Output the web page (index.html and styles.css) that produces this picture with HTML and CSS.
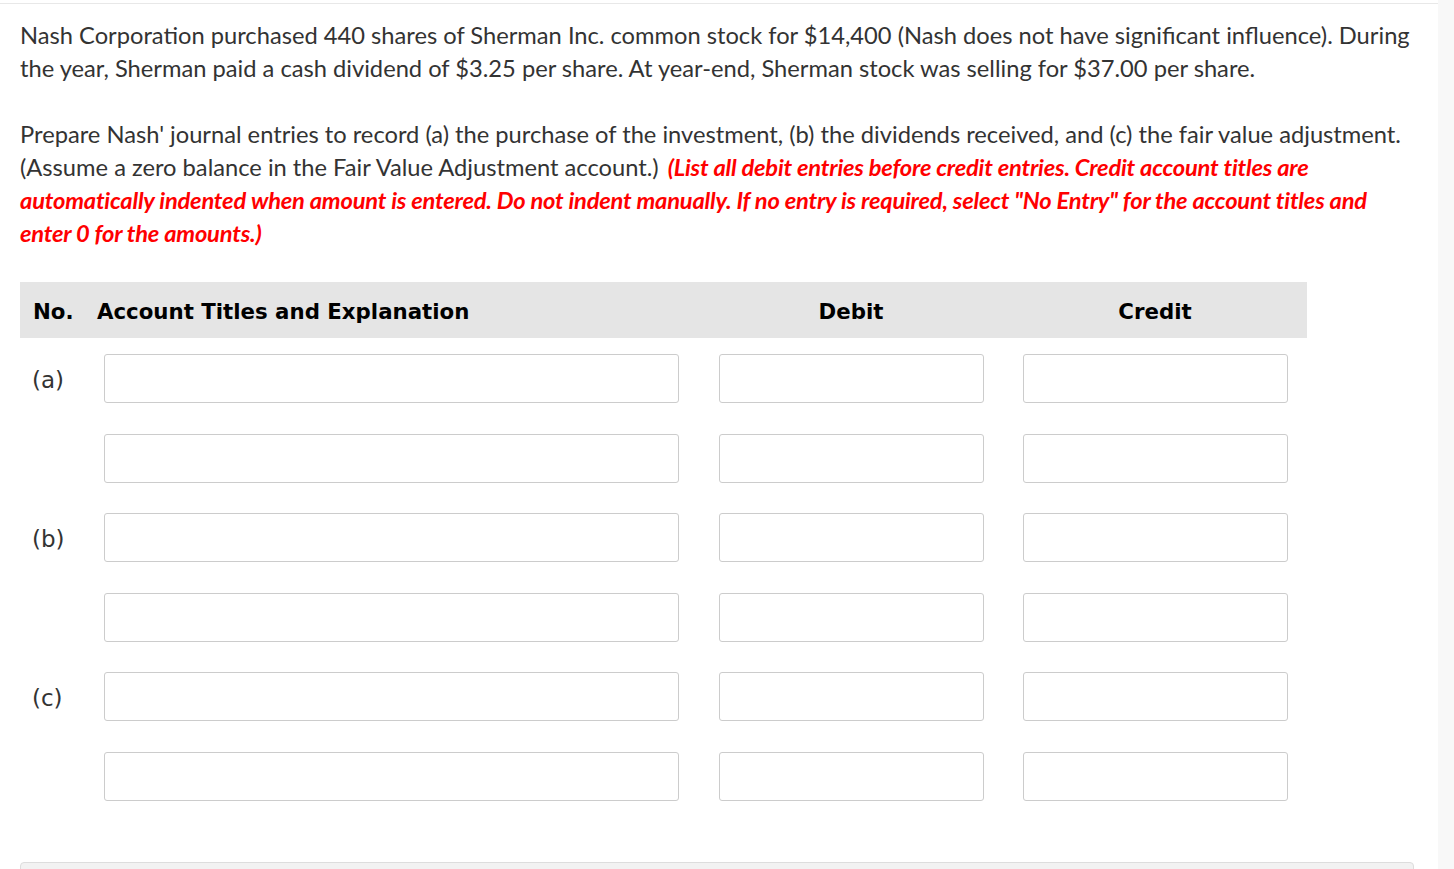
FILE: index.html
```html
<!DOCTYPE html>
<html lang="en">
<head>
    <meta charset="UTF-8">
    <title>Journal Entries - Nash Corporation</title>
    <link rel="stylesheet" href="styles.css">
</head>
<body>
    <div class="page">
        <div class="question">
            <p>Nash Corporation purchased 440 shares of Sherman Inc. common stock for $14,400 (Nash does not have significant influence). During the year, Sherman paid a cash dividend of $3.25 per share. At year-end, Sherman stock was selling for $37.00 per share.</p>

            <p>Prepare Nash' journal entries to record (a) the purchase of the investment, (b) the dividends received, and (c) the fair value adjustment. (Assume a zero balance in the Fair Value Adjustment account.) <span class="note">(List all debit entries before credit entries. Credit account titles are automatically indented when amount is entered. Do not indent manually. If no entry is required, select "No Entry" for the account titles and enter 0 for the amounts.)</span></p>

            <div class="journal">
                <div class="journal-head">
                    <div class="col-no">No.</div>
                    <div class="col-account">Account Titles and Explanation</div>
                    <div class="col-amount">Debit</div>
                    <div class="col-amount">Credit</div>
                </div>

                <div class="journal-row">
                    <div class="row-label">(a)</div>
                    <div class="cell-account"><input type="text"></div>
                    <div class="cell-amount"><input type="text"></div>
                    <div class="cell-amount"><input type="text"></div>
                </div>
                <div class="journal-row">
                    <div class="row-label"></div>
                    <div class="cell-account"><input type="text"></div>
                    <div class="cell-amount"><input type="text"></div>
                    <div class="cell-amount"><input type="text"></div>
                </div>

                <div class="journal-row">
                    <div class="row-label">(b)</div>
                    <div class="cell-account"><input type="text"></div>
                    <div class="cell-amount"><input type="text"></div>
                    <div class="cell-amount"><input type="text"></div>
                </div>
                <div class="journal-row">
                    <div class="row-label"></div>
                    <div class="cell-account"><input type="text"></div>
                    <div class="cell-amount"><input type="text"></div>
                    <div class="cell-amount"><input type="text"></div>
                </div>

                <div class="journal-row">
                    <div class="row-label">(c)</div>
                    <div class="cell-account"><input type="text"></div>
                    <div class="cell-amount"><input type="text"></div>
                    <div class="cell-amount"><input type="text"></div>
                </div>
                <div class="journal-row">
                    <div class="row-label"></div>
                    <div class="cell-account"><input type="text"></div>
                    <div class="cell-amount"><input type="text"></div>
                    <div class="cell-amount"><input type="text"></div>
                </div>
            </div>

            <div class="footer-box"></div>
        </div>
        <div class="side-strip"></div>
    </div>
</body>
</html>
```

FILE: styles.css
```css
:root {
    --text-color: #333333;
    --note-color: #ff0000;
    --head-bg: #e5e5e5;
    --input-border: #cccccc;
}

* {
    box-sizing: border-box;
    margin: 0;
    padding: 0;
}

body {
    background: #ffffff;
    font-family: Lato, "Open Sans", sans-serif;
    color: var(--text-color);
    height: 869px;
    overflow: hidden;
}

.page {
    display: flex;
    height: 100%;
}

.question {
    width: 1438px;
    border-top: 1px solid #e8e8e8;
    margin-top: 3px;
    padding: 15px 22px 0 20px;
}

.side-strip {
    flex: 1;
    background: #f8f8f8;
}

.question p {
    font-size: 23.7px;
    line-height: 33px;
    margin-bottom: 33px;
}

.note {
    color: var(--note-color);
    font-style: italic;
    font-weight: bold;
    letter-spacing: -0.2px;
    margin-left: 3px;
}

.journal {
    width: 1287px;
    margin-top: -1px;
}

.journal-head {
    display: grid;
    grid-template-columns: 77px 602px 304px 304px;
    align-items: center;
    height: 56px;
    padding-top: 3px;
    background: var(--head-bg);
    font-family: "DejaVu Sans", Verdana, sans-serif;
    font-weight: bold;
    font-size: 21.3px;
    color: #000000;
}

.col-no {
    padding-left: 13px;
}

.col-amount {
    text-align: center;
}

.journal-row {
    display: grid;
    grid-template-columns: 64px 615px 304px 304px;
    height: 79.5px;
    padding-top: 16px;
}

.row-label {
    font-family: "DejaVu Sans", Verdana, sans-serif;
    font-size: 23px;
    line-height: 52px;
    padding-left: 12px;
    color: var(--text-color);
}

.cell-account {
    padding: 0 20px;
}

.cell-amount {
    padding: 0 19px 0 20px;
}

.journal-row input {
    display: block;
    width: 100%;
    height: 49px;
    border: 1px solid var(--input-border);
    border-radius: 3px;
    background: #ffffff;
    font-size: 18px;
    padding: 0 10px;
}

.footer-box {
    margin-top: 47px;
    width: 1394px;
    height: 40px;
    background: #f2f2f2;
    border: 1px solid #dddddd;
    border-radius: 4px;
}
```
